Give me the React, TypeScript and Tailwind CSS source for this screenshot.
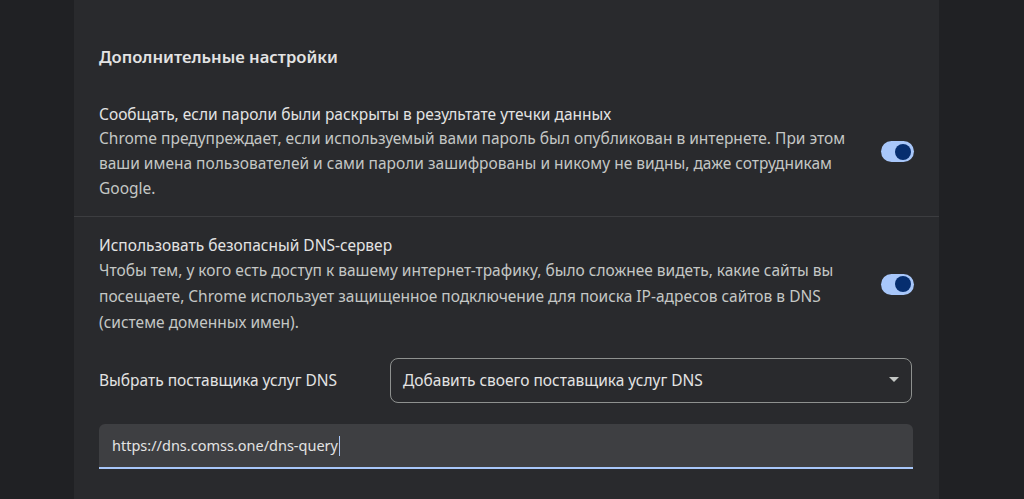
import React from 'react';

interface ToggleRowProps {
  title: string;
  description: string;
  checked: boolean;
  leading?: string;
}

function Toggle({ checked }: { checked: boolean }) {
  return (
    <div
      role="switch"
      aria-checked={checked}
      className="flex h-[21px] w-[33px] shrink-0 items-center justify-end rounded-full bg-[#a8c7fa] pr-[3px]"
    >
      <div className="h-[16px] w-[16px] rounded-full bg-[#062e6f]" />
    </div>
  );
}

function ToggleRow({ title, description, checked, leading = 'leading-[25px]' }: ToggleRowProps) {
  return (
    <div className="flex items-center gap-8">
      <div className="flex-1">
        <div className="text-[15.5px] leading-[24px] text-[#e3e3e3]">{title}</div>
        <div className={`text-[15.5px] text-[#c4c7c5] ${leading}`}>{description}</div>
      </div>
      <Toggle checked={checked} />
    </div>
  );
}

export default function App() {
  return (
    <div
      className="h-[499px] w-full overflow-hidden bg-[#202124]"
      style={{ fontFamily: '"Noto Sans", "Open Sans", sans-serif' }}
    >
      <div className="ml-[74px] h-full w-[865px] bg-[#292a2d]">
        <div className="px-[25px] pt-[45px] pb-[33px]">
          <h2 className="text-[16.6px] font-semibold leading-[24px] text-[#e3e3e3]">
            Дополнительные настройки
          </h2>
        </div>

        <div className="px-[25px] pb-[15px]">
          <ToggleRow
            checked
            title="Сообщать, если пароли были раскрыты в результате утечки данных"
            description="Chrome предупреждает, если используемый вами пароль был опубликован в интернете. При этом ваши имена пользователей и сами пароли зашифрованы и никому не видны, даже сотрудникам Google."
          />
        </div>

        <div className="h-px bg-[#3c3d40]" />

        <div className="px-[25px] pt-[16px]">
          <ToggleRow
            checked
            leading="leading-[26px]"
            title="Использовать безопасный DNS-сервер"
            description="Чтобы тем, у кого есть доступ к вашему интернет-трафику, было сложнее видеть, какие сайты вы посещаете, Chrome использует защищенное подключение для поиска IP-адресов сайтов в DNS (системе доменных имен)."
          />

          <div className="mt-[23px] flex items-center">
            <div className="w-[291px] text-[15.5px] text-[#e3e3e3]">Выбрать поставщика услуг DNS</div>
            <div className="flex h-[45px] w-[522px] items-center justify-between rounded-lg border border-[#8e918f] pl-[12px] pr-[12px] text-[15.5px] text-[#e3e3e3]">
              <span>Добавить своего поставщика услуг DNS</span>
              <svg width="10" height="6" viewBox="0 0 10 6" className="mb-[2px]">
                <path d="M0 0 L10 0 L5 5 Z" fill="#c4c7c5" />
              </svg>
            </div>
          </div>

          <div className="mt-[21px] flex h-[45px] w-[814px] items-center rounded-t-md border-b-2 border-[#a8c7fa] bg-[#3e3f42] pl-[13px] text-[14.5px] text-[#e3e3e3]">
            <span>https://dns.comss.one/dns-query</span>
            <span className="ml-px h-[20px] w-px bg-[#a8c7fa]" />
          </div>
        </div>
      </div>
    </div>
  );
}
